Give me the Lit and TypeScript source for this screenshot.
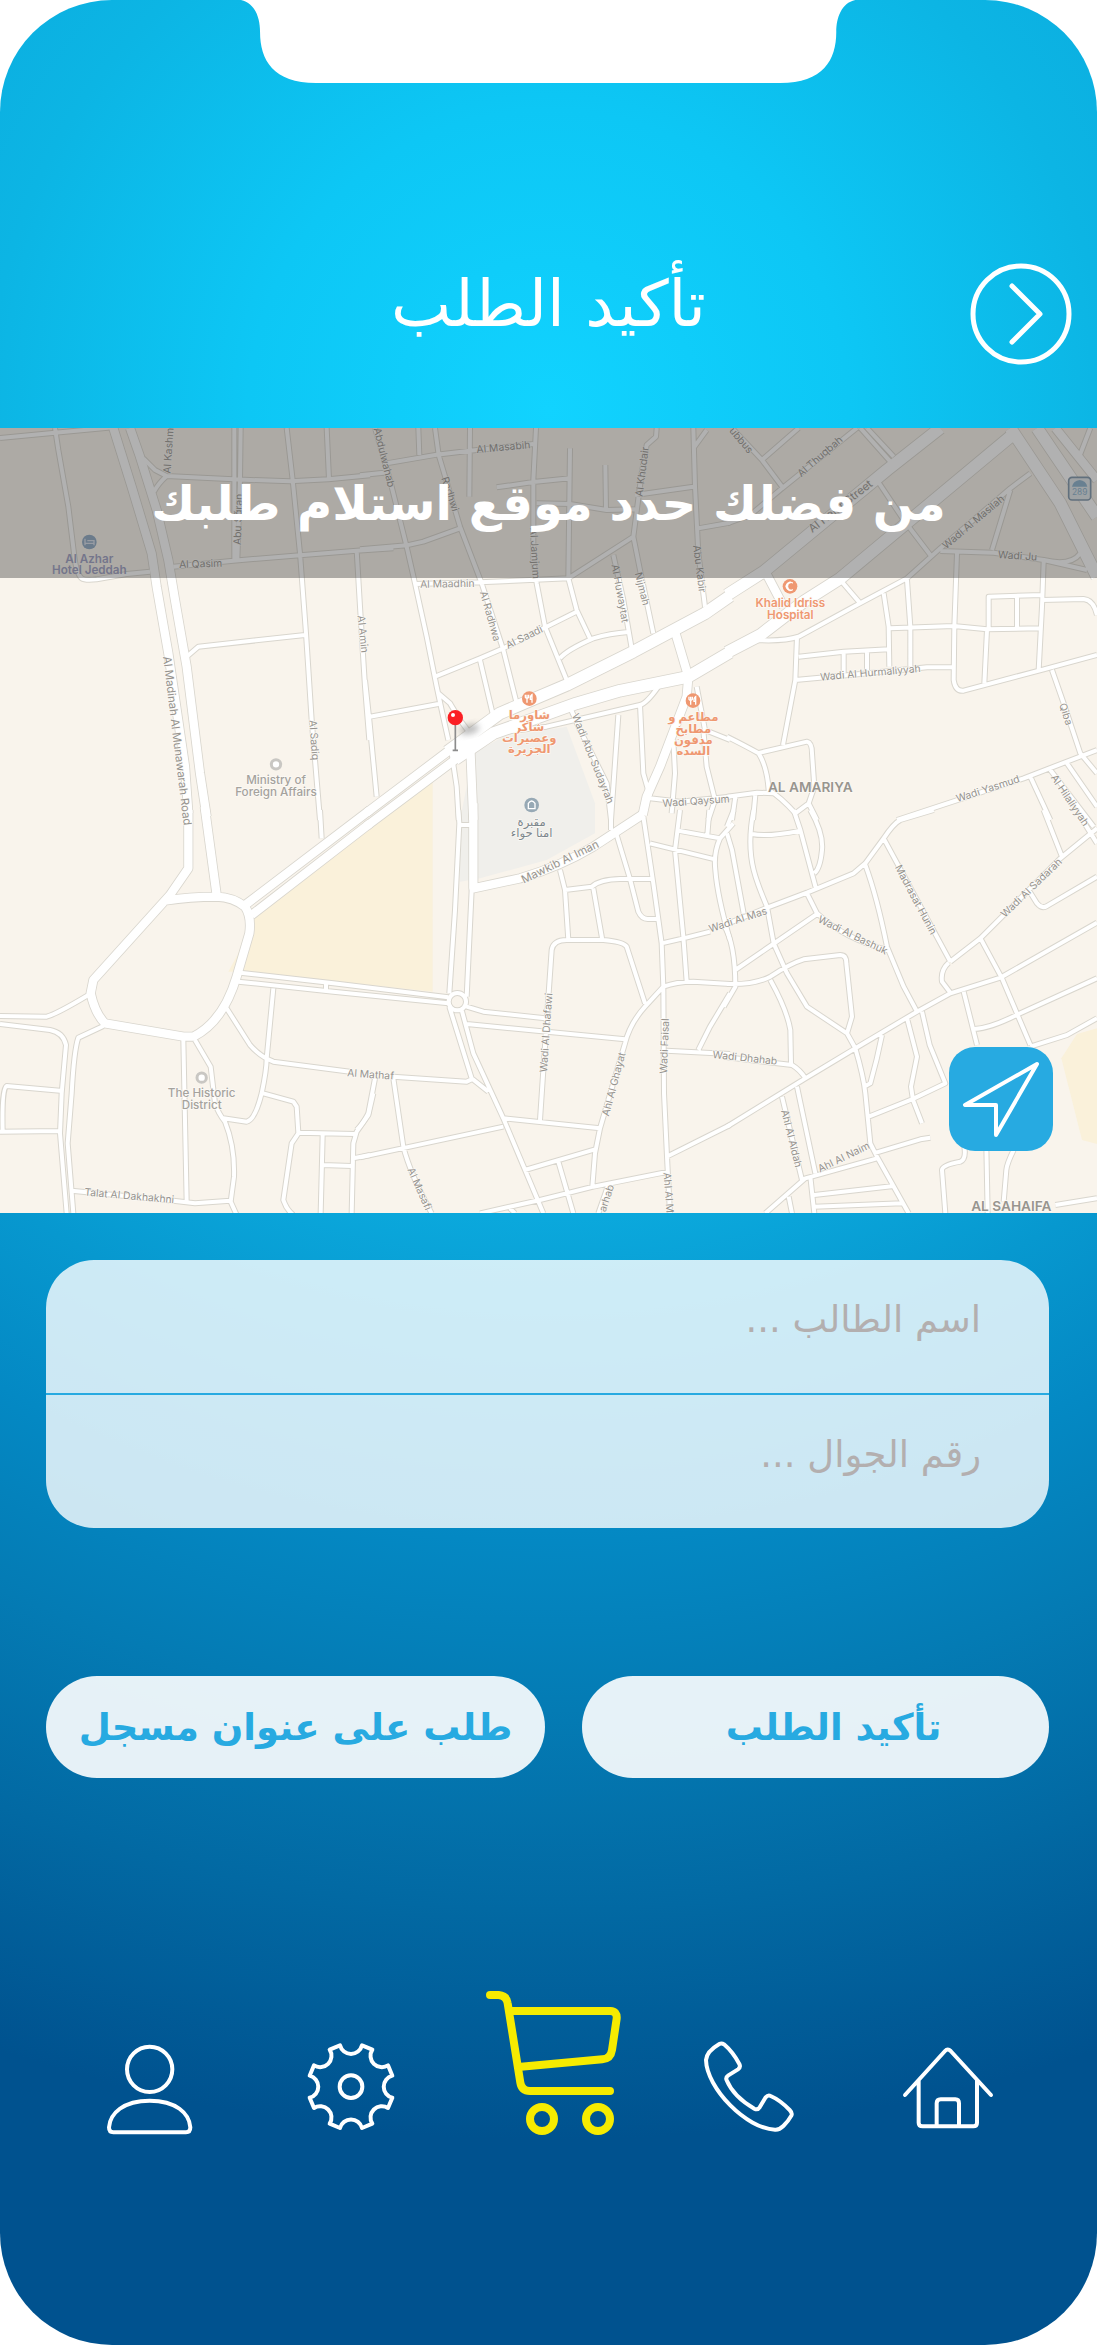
import { LitElement, html, css, svg } from "lit";
import { customElement, property } from "lit/decorators.js";

type Label = [x: number, y: number, angle: number, text: string, kind?: string];

interface Tile {
  x: number;
  y: number;
  streets: string;
  avenues: string;
  highways?: string;
  labels: Label[];
}

/* Street network, split into six tiles. Each tile holds its own local coordinates. */
const TILES: Tile[] = [
  {
    x: 0,
    y: 0,
    streets: `M0 54L165 38L340 22M165 24L175 90L205 260L222 400Q228 460 245 475Q255 482 290 478L380 462L450 455
      M430 115L465 150L500 168L700 178L870 184L985 178L1110 166M500 168Q475 190 462 215M703 24V420M722 24L720 180L712 420
      M860 24L878 180L900 400L918 640L935 900L960 1200M980 24L987 178M520 440L700 422L900 406L1070 392L1180 385
      M1070 392L1080 560L1095 800L1108 960M560 710L595 680L915 645`,
    avenues: `M340 24L395 200L455 400L470 500L505 700L555 1040L565 1180M390 24L420 110L470 270L505 420L525 540L560 740L600 1060L620 1190`,
    labels: [
      [504, 92, -86, "Al Kashm"],
      [713, 298, -88, "Abu Sǧran"],
      [602, 430, -2, "Al Qasim"],
      [1090, 642, 84, "Al Amin"],
      [944, 960, 86, "Al Sadiq"],
      [532, 962, 83, "Al Madinah Al Munawarah Road", "major"],
    ],
  },
  {
    x: 1080,
    y: 0,
    streets: `M0 166L85 157M45 24L90 180L140 380L165 490L200 650L230 800L245 870L265 960M80 130L230 104L330 92L520 72M175 24L178 105
      M225 24L236 105L300 320L365 490L430 690L470 850M330 24L328 230M528 24L520 180V420L530 490L555 620L620 780
      M410 202L520 186L630 175M630 85L625 470M736 135L738 270M530 250L630 252L740 270L825 268
      M890 24L888 50L860 75L845 160L820 350L625 475L360 487L165 492M0 388L140 376L190 365L300 325
      M820 350L840 450L880 640M760 405L790 540L815 685M1000 24L1005 200L1015 400L1035 560M1040 30L1000 85
      M825 225L1000 200M1015 325L1110 308M625 475L650 570L690 655M225 770L360 715L430 685L650 575
      M600 715Q620 690 700 655Q750 640 805 636M360 720L400 890M30 890L235 852M235 820L270 850L300 900L330 940
      M895 800Q860 850 840 855L560 920L400 940M840 855L850 1060L870 1130M625 850L660 930L740 1090L753 1200M775 885L753 1200
      M1010 800L1035 930L1110 960M940 960L945 1060L935 1180M1030 930L1040 1040L1065 1140L1045 1200M870 1135L960 1145L1110 1130
      M15 780L28 900L50 1130M275 1000L290 1100L296 1200`,
    avenues: `M945 635L985 770L980 830L900 1040L860 1130L848 1185M330 960L340 1200M20 1178L280 982M20 1218L300 1008`,
    highways: `M262 995L420 880L620 795L820 695L1035 580L1110 528M285 1018L400 940L650 850L780 812L985 770L1110 697`,
    labels: [
      [74, 112, 76, "Abdulwahab"],
      [272, 222, 72, "Radhwi"],
      [430, 80, -5, "Al Masabih"],
      [526, 400, 87, "Al Jamjum"],
      [845, 155, -83, "Al Khudair"],
      [262, 490, -1, "Al Maadhin"],
      [392, 588, 74, "Al Radhwa"],
      [492, 650, -26, "Al Saadi"],
      [782, 520, 80, "Al Huwaytat"],
      [848, 506, 76, "Nijmah"],
      [1020, 446, 83, "Abu Kabir"],
      [700, 1015, 68, "Wadi Abu Sudayrah"],
      [1008, 1142, -4, "Wadi Qaysum"],
    ],
  },
  {
    x: 2181,
    y: 0,
    streets: `M15 24L105 120L165 200M105 120L215 24M0 310L70 285L165 205L390 24M400 24L490 125M420 24L500 110M450 180L530 300L610 405
      M1090 24L1055 115M850 210L795 390M910 160L850 205L640 385L540 475L380 560L215 650Q170 665 85 660
      M640 393L800 398L950 420L1080 450M950 420Q1030 440 1060 400M950 425L945 560L935 750
      M690 400L682 620L680 780Q685 815 710 812L950 748L1110 705M540 480L550 620V740M470 520L485 620L487 740
      M490 625L680 618L780 628L940 625M785 625V530L945 525M870 530V625M780 630L772 790M945 540L1070 537Q1100 540 1110 585
      M210 650L205 780L168 975M215 710L350 695L485 688M350 700V760M420 692V750M205 780L400 762L600 742H680M340 480L400 550
      M0 950Q60 980 95 1000Q120 1040 125 1110Q160 1130 205 1180M90 1000L240 965Q255 968 255 1000L262 1100L245 1150L205 1180
      M245 1150L270 1200M0 1130L90 1118L140 1120M25 1130L15 1200M85 1125L78 1200M975 750L1010 850L1060 1000L1110 1060
      M510 1200L890 1075L1110 990M910 1070L970 1200M970 1050L1100 1220M1020 1030L1110 1160`,
    avenues: `M115 455L170 560M985 24L1110 180`,
    highways: `M0 525L110 455L480 150L640 24M0 697L100 645L230 545L340 475L850 50M850 24L1000 250L1110 470M930 24L1110 290`,
    labels: [
      [44, 60, 50, "ubbus"],
      [278, 108, -41, "Al Thuqbah"],
      [340, 258, -38, "Al Hejar Street", "major"],
      [738, 305, -40, "Wadi Al Masilah"],
      [872, 406, 4, "Wadi Ju"],
      [430, 757, -5, "Wadi Al Hurmaliyyah"],
      [1018, 882, 72, "Qiba"],
      [782, 1105, -18, "Wadi Yasmud"],
      [1030, 1140, 56, "Al Hilaliyyah"],
    ],
  },
  {
    x: 0,
    y: 1170,
    streets: `M960 0L965 85M720 488L1000 520L1345 562M715 515L1000 545L1345 580M978 518V545M0 618L140 620Q170 612 265 555
      M0 642L150 660Q190 668 198 705L185 850L180 970L200 1210M310 648L235 683Q222 720 215 850L203 1000L220 1210
      M180 842L20 828Q5 835 8 965M0 965L180 963M215 1142L520 1172L585 1180L690 1172M550 690L560 1175
      M585 690L632 770L645 880Q655 910 675 935Q705 1010 702 1100L692 1175L710 1215
      M670 925L740 935Q765 930 785 850Q800 780 800 745L820 535M680 595L750 705Q780 740 820 755L1050 785
      M790 850L880 875L890 890L895 968L1065 972M895 970L875 1000L850 1170Q860 1200 880 1215M968 975L962 1210M968 1065L1055 1068
      M1055 1210L1060 1000L1070 965L1105 915L1120 850M1060 1045L1110 1035`,
    avenues: `M565 0V175L510 255L280 510L272 550Q285 610 315 640L550 680H580Q670 635 710 500L748 370Q755 320 735 290Q700 262 650 260Q570 260 495 272
      M614 -10L650 255M738 283L1110 0M755 315L1110 40`,
    labels: [
      [388, 1156, 5, "Talat Al Dakhakhni"],
      [1112, 792, 4, "Al Mathaf"],
    ],
  },
  {
    x: 1080,
    y: 1170,
    streets: `M295 0L298 40L285 300L268 550M298 45H340M335 240L320 560M268 590L335 805L385 845M305 600L340 730L430 925L550 1210
      M320 590L370 605L555 625M320 642L795 688M100 800L320 815L335 808M45 805L25 910Q10 940 -10 960M100 805L130 1010Q150 1090 215 1210
      M0 1042L430 950M430 925L720 955M540 930L550 780L575 420Q580 390 620 390H730Q790 395 800 410L855 580
      M600 180L615 240L625 390M615 240L695 230Q720 208 780 207H880M700 235L727 390M770 75L810 207L835 305Q845 328 865 327H895
      M753 0V60M850 20L880 220L905 400L910 530L912 850L922 1060L930 1210M870 100L1065 148M960 0L945 120L970 380L980 515
      M1120 40L1080 85Q1060 130 1066 180Q1072 260 1110 390M955 62L1080 85M1048 0L1042 75M905 400L970 385L1050 365
      M910 530Q950 515 1000 515L1110 522M910 530L855 590Q810 640 795 700L720 955L705 1030L697 1130
      M920 722L1110 732M1015 720L1050 650L1110 550M920 1040L1110 945M360 1210L540 1170L700 1130L925 1085
      M495 1080L705 1018M595 1055L640 1210M745 1125L715 1210M450 1195L465 1210M318 575A26 26 0 1 1 266 575A26 26 0 1 1 318 575`,
    avenues: `M340 -20V235L480 205Q600 170 700 110L850 12`,
    labels: [
      [600, 155, -26, "Mawkib Al Iman", "major"],
      [557, 668, -86, "Wadi Al Dhafawi"],
      [760, 822, -75, "Ahl Al Ghayat"],
      [912, 708, -88, "Wadi Faisal"],
      [180, 1136, 66, "Al Masafi"],
      [738, 1164, -72, "arhab"],
      [927, 1148, 86, "Ahl Al M"],
    ],
  },
  {
    x: 2181,
    y: 1170,
    streets: `M80 0Q60 100 80 180Q90 220 120 290L140 400L180 490L240 590L360 670L385 715Q410 800 415 850L430 1000L450 1040L545 1210
      M75 72Q120 82 220 62M200 0L220 60L268 240M250 0Q290 70 285 120Q280 175 262 190M20 0L0 50M0 70L15 120L50 310
      M-20 350L115 295L240 248L380 190L415 160L470 85Q500 40 520 30L620 0M240 250L270 310Q350 385 480 420M25 480L270 312
      M415 165Q450 260 480 410L530 530L570 605M470 85L670 455M-10 345Q25 400 25 530L-10 590
      M0 522Q80 525 130 500Q190 460 230 448L340 435Q358 435 358 460L375 620L360 670M130 510Q180 600 190 660L192 760
      M0 742L195 765Q220 780 235 805M0 950L235 805L385 715L570 605L670 550L820 503L1110 338
      M670 455L760 385L1000 145L1110 55M665 458Q640 480 645 515L670 548M950 0L1005 140M1060 20L1110 100
      M905 240L930 280Q945 298 960 288L1110 200M762 388L825 505L910 705M710 545L750 705M742 657Q790 655 875 612L1110 505
      M910 710L1020 675L1110 625M585 605L608 705L655 820L555 868L425 920M540 625L570 740L552 830L558 870L585 940
      M465 675Q450 750 430 820L415 828M165 860L225 1110M210 830L265 1090M115 1210L235 1105L450 1045M440 1030L580 988L610 983
      M250 1100L262 1210M262 1155L500 1128M262 1190L525 1180M185 1160L195 1210M712 1010Q718 1048 700 1055Q645 1065 645 1080L655 1210
      M778 1010L782 1210M860 1020Q840 1060 838 1080L830 1175M985 1185L1110 1165`,
    avenues: ``,
    labels: [
      [32, 328, -18, "Wadi Al Mas"],
      [378, 374, 26, "Wadi Al Bashuk"],
      [568, 268, 62, "Madrasat Hunin"],
      [912, 232, -44, "Wadi Al Sadarah"],
      [54, 742, 6, "Wadi Dhahab"],
      [195, 985, 76, "Ahl Al Aldah"],
      [350, 1040, -26, "Ahl Al Naim"],
    ],
  },
];

@customElement("street-map")
class StreetMap extends LitElement {
  static styles = css`
    :host {
      display: block;
    }
    .map {
      display: block;
      width: 100%;
      height: 100%;
      font-family: Inter, "Noto Sans", "DejaVu Sans", sans-serif;
    }
    .land {
      fill: #f9f4ec;
    }
    .sand {
      fill: #faf1da;
    }
    .park {
      fill: #f0efeb;
    }
    .road {
      fill: none;
      stroke-linejoin: round;
    }
    .casing {
      stroke: #d9d6ce;
    }
    .surface {
      stroke: #ffffff;
    }
    .street.casing {
      stroke-width: 18px;
    }
    .street.surface {
      stroke-width: 12px;
    }
    .avenue.casing {
      stroke-width: 30px;
    }
    .avenue.surface {
      stroke-width: 25px;
    }
    .highway.casing {
      stroke-width: 40px;
    }
    .highway.surface {
      stroke-width: 35px;
    }
    text {
      text-anchor: middle;
      dominant-baseline: central;
      font-size: 31px;
      fill: #96938e;
      paint-order: stroke;
      stroke: #fcfaf6;
      stroke-width: 4px;
    }
    .major {
      font-size: 34px;
    }
    .place {
      font-size: 35px;
      font-weight: 500;
      fill: #a5a29d;
    }
    .district {
      font-size: 41px;
      font-weight: 600;
      fill: #98958f;
    }
    .food {
      font-size: 35px;
      font-weight: 600;
      fill: #ef9871;
    }
    .hotel {
      font-size: 35px;
      font-weight: 600;
      fill: #9a9cc0;
      stroke: none;
    }
    .memorial {
      font-size: 35px;
      fill: #7d868c;
    }
    .shield {
      font-size: 25px;
      fill: #86aeca;
      stroke: none;
    }
  `;

  private layer(kind: string) {
    return TILES.map(
      (t) => svg`<g transform="translate(${t.x} ${t.y})">
        <path class="road street ${kind}" d=${t.streets}></path>
        <path class="road avenue ${kind}" d=${t.avenues}></path>
        <path class="road highway ${kind}" d=${t.highways ?? ""}></path>
      </g>`
    );
  }

  private lines(x: number, y: number, cls: string, rows: string[]) {
    return rows.map((r, i) => svg`<text class=${cls} x=${x} y=${y + i * 34}>${r}</text>`);
  }

  private dining(x: number, y: number) {
    return svg`<g transform="translate(${x} ${y})">
      <circle r="22" fill="#ef9871"></circle>
      <path d="M-7 12V-12M-12 -12V-4Q-7 2 -2 -4V-12M8 12V-12Q2 -8 3 2H8" fill="none" stroke="#fff" stroke-width="4"></path>
    </g>`;
  }

  render() {
    return html`
      <svg class="map" viewBox="0 24 3291 2355" preserveAspectRatio="xMidYMid slice" role="img" aria-label="خريطة">
        <defs>
          <filter id="soft" x="-50%" y="-50%" width="200%" height="200%"><feGaussianBlur stdDeviation="9"></feGaussianBlur></filter>
        </defs>
        <rect class="land" y="0" width="3291" height="2400"></rect>
        <path class="sand" d="M760 1495L1298 1080V1715L740 1655H685L715 1600Z"></path>
        <path class="sand" d="M3291 1825L3231 1842L3184 1915L3246 2160L3291 2172Z"></path>
        <path class="park" d="M1380 1385V1200L1420 1000L1510 950L1700 920L1785 1150V1240L1640 1320L1440 1375Z"></path>
        ${this.layer("casing")} ${this.layer("surface")}
        ${TILES.map(
          (t) => svg`<g transform="translate(${t.x} ${t.y})">
            ${t.labels.map(([x, y, a, s, k]) => svg`<text class=${k ?? "minor"} transform="translate(${x} ${y}) rotate(${a})">${s}</text>`)}
          </g>`
        )}

        <circle cx="268" cy="366" r="22" fill="#8aa5c0"></circle>
        <path d="M255 356V376M255 370H282V376M262 362H282V370" fill="none" stroke="#d6dde8" stroke-width="4"></path>
        ${this.lines(268, 416, "hotel", ["Al Azhar", "Hotel Jeddah"])}

        <circle cx="828" cy="1033" r="14" fill="#fff" stroke="#c9c7c3" stroke-width="9"></circle>
        ${this.lines(828, 1081, "place", ["Ministry of", "Foreign Affairs"])}
        <circle cx="605" cy="1973" r="14" fill="#fff" stroke="#c9c7c3" stroke-width="9"></circle>
        ${this.lines(605, 2020, "place", ["The Historic", "District"])}

        ${this.dining(1588, 836)} ${this.lines(1588, 886, "food", ["شاورما", "شاكر", "وعصيرات", "الجزيرة"])}
        ${this.dining(2079, 842)} ${this.lines(2080, 892, "food", ["مطاعم و", "مطابخ", "مدفون", "السده"])}

        <circle cx="1595" cy="1155" r="22" fill="#97a9b5"></circle>
        <path d="M1585 1166V1150Q1595 1136 1605 1150V1166Z" fill="none" stroke="#fff" stroke-width="4"></path>
        ${this.lines(1595, 1206, "memorial", ["مقبرة", "امنا حواء"])}

        <circle cx="2370" cy="499" r="22" fill="#ef9871"></circle>
        <path d="M2379 489A13 13 0 1 0 2379 509A11 11 0 1 1 2379 489Z" fill="#fff" stroke="#fff" stroke-width="2"></path>
        ${this.lines(2371, 550, "food", ["Khalid Idriss", "Hospital"])}

        <text class="district" x="2431" y="1100">AL AMARIYA</text>
        <text class="district" x="3034" y="2358">AL SAHAIFA</text>

        <rect x="3206" y="172" width="66" height="68" rx="10" fill="#dfe6ea" stroke="#7b93a8" stroke-width="5"></rect>
        <path d="M3216 200Q3220 182 3239 180Q3258 182 3262 200Z" fill="#86aeca"></path>
        <text class="shield" x="3239" y="217">289</text>

        <ellipse cx="1408" cy="928" rx="30" ry="14" fill="#777" opacity="0.5" filter="url(#soft)" transform="rotate(-14 1408 928)"></ellipse>
        <path d="M1366 900V990M1358 991H1374" fill="none" stroke="#8c8c8c" stroke-width="5"></path>
        <circle cx="1366" cy="893" r="23" fill="#fb1f24"></circle>
        <circle cx="1359" cy="885" r="6" fill="#fff"></circle>
      </svg>
    `;
  }
}

const ICONS = {
  home: svg`<svg class="icon" viewBox="948 93 432 432" aria-hidden="true">
    <path d="M1035 405L1155 273Q1163 264 1172 273L1293 405M1076 362V488Q1076 499 1088 499H1240Q1251 499 1251 488V362M1130 495V430Q1130 418 1142 418H1186Q1197 418 1197 430V495"></path></svg>`,
  phone: svg`<svg class="icon" viewBox="348 93 432 432" aria-hidden="true">
    <path d="M478 252Q440 274 438 300C440 385 560 507 645 509Q658 510 670 498Q686 482 694 467Q698 459 689 450Q660 420 632 408Q624 404 617 412L599 442Q593 451 583 446Q521 411 500 361Q496 352 505 346L534 328Q543 322 538 312Q518 275 492 253Q485 248 478 252Z"></path></svg>`,
  cart: svg`<svg class="icon heavy" viewBox="1248 93 432 432" aria-hidden="true">
    <path d="M1287 105H1313Q1337 107 1340 130L1378 368Q1382 393 1407 393H1647M1346 153H1648Q1669 154 1667 176L1653 270Q1649 296 1624 298L1380 320"></path>
    <circle cx="1443" cy="477" r="36"></circle><circle cx="1611" cy="477" r="36"></circle></svg>`,
  gear: svg`<svg class="icon" viewBox="650 93 432 432" aria-hidden="true">
    <path d="M839 256A34 34 0 0 0 905 256L936 269A34 34 0 0 0 983 316L996 347A34 34 0 0 0 996 413L983 444A34 34 0 0 0 936 491L905 504A34 34 0 0 0 839 504L808 491A34 34 0 0 0 761 444L748 413A34 34 0 0 0 748 347L761 316A34 34 0 0 0 808 269Z"></path>
    <circle cx="872" cy="380" r="34"></circle></svg>`,
  user: svg`<svg class="icon" viewBox="51 93 432 432" aria-hidden="true">
    <circle cx="269" cy="328" r="68"></circle>
    <path d="M160 517Q147 517 147 502C150 460 190 422 269 422S388 460 391 502Q391 517 378 517Z"></path></svg>`,
};

@customElement("tab-bar")
class TabBar extends LitElement {
  @property() active = "cart";

  static styles = css`
    :host {
      display: block;
    }
    .tabs {
      display: grid;
      grid-template-columns: repeat(5, 1fr);
      justify-items: center;
      padding: 0 49px;
    }
    .tab {
      display: block;
      color: #ffffff;
    }
    .tab.active {
      color: #f6eb00;
    }
    .icon {
      display: block;
      width: 144px;
      height: 144px;
      overflow: visible;
      fill: none;
      stroke: currentColor;
      stroke-width: 12px;
      stroke-linecap: round;
      stroke-linejoin: round;
    }
    .heavy {
      stroke-width: 24px;
    }
  `;

  render() {
    const tabs = [
      { id: "home", label: "الرئيسية", icon: ICONS.home },
      { id: "phone", label: "اتصل بنا", icon: ICONS.phone },
      { id: "cart", label: "السلة", icon: ICONS.cart },
      { id: "gear", label: "الإعدادات", icon: ICONS.gear },
      { id: "user", label: "حسابي", icon: ICONS.user },
    ];
    return html`<nav class="tabs">
      ${tabs.map(
        (t) => html`<a class="tab ${t.id === this.active ? "active" : ""}" href="#${t.id}" aria-label=${t.label}>${t.icon}</a>`
      )}
    </nav>`;
  }
}

@customElement("app-root")
class AppRoot extends LitElement {
  static styles = css`
    :host {
      display: block;
      background: #ffffff;
      font-family: "DejaVu Sans", sans-serif;
    }
    * {
      box-sizing: border-box;
    }
    .screen {
      display: flex;
      flex-direction: column;
      min-height: 100vh;
      border-radius: 112px;
      overflow: hidden;
      background: radial-gradient(
        circle at 50% 410px,
        #11d3ff 0,
        #0dc7f5 300px,
        #0cb5e4 560px,
        #0ba9dd 800px,
        #0798cf 960px,
        #0489c4 1120px,
        #047bb4 1300px,
        #0269a3 1500px,
        #00528f 1730px
      );
    }
    .notch {
      display: block;
      width: 56%;
      height: 83px;
      margin: 0 auto;
      fill: #ffffff;
    }
    .header {
      display: grid;
      grid-template-columns: 102px 1fr 102px;
      align-items: center;
      padding: 180px 25px 63px;
    }
    .title {
      grid-column: 2;
      margin: 0;
      padding-bottom: 20px;
      font-size: 64px;
      font-weight: 400;
      line-height: 82px;
      text-align: center;
      color: #ffffff;
    }
    .back {
      grid-column: 1;
      grid-row: 1;
      width: 102px;
      height: 102px;
      padding: 0;
      border: 0;
      background: none;
    }
    .glyph {
      display: block;
      width: 100%;
      height: 100%;
      fill: none;
      stroke: #ffffff;
      stroke-linecap: round;
      stroke-linejoin: round;
    }
    .thick {
      stroke-width: 5px;
    }
    .thin {
      stroke-width: 4px;
    }
    .picker {
      position: relative;
    }
    .streets {
      aspect-ratio: 1097 / 785;
    }
    .prompt {
      position: absolute;
      inset: 0 0 auto;
      margin: 0;
      font-size: 48px;
      font-weight: 700;
      line-height: 150px;
      text-align: center;
      color: #ffffff;
      background: rgba(60, 60, 60, 0.4);
    }
    .locate {
      position: absolute;
      right: 44px;
      bottom: 62px;
      width: 104px;
      height: 104px;
      padding: 0;
      border: 0;
      border-radius: 26px;
      background: #27aae1;
    }
    .order {
      display: flex;
      flex-direction: column;
      gap: 148px;
      padding: 47px 48px 0 46px;
    }
    .fields {
      border-radius: 48px;
      overflow: hidden;
      background: rgba(255, 255, 255, 0.8);
    }
    .field {
      display: block;
      width: 100%;
      height: 133px;
      padding: 0 68px 14px;
      border: 0;
      background: none;
      font: 37px "DejaVu Sans", sans-serif;
      color: #6d6e71;
      outline: none;
    }
    .field + .field {
      height: 135px;
      border-top: 2px solid #27aae1;
    }
    .field::placeholder {
      color: #b3afaf;
      opacity: 1;
    }
    .actions {
      display: grid;
      grid-template-columns: 467fr 499fr;
      gap: 37px;
    }
    .action {
      height: 102px;
      padding: 0;
      border: 0;
      border-radius: 51px;
      background: rgba(255, 255, 255, 0.9);
      font: 700 37px "DejaVu Sans", sans-serif;
      color: #27aae1;
      white-space: nowrap;
    }
    .confirm {
      padding-left: 36px;
    }
    .tabs {
      margin: 213px 0 210px;
    }
  `;

  render() {
    return html`
      <main class="screen" dir="rtl" lang="ar">
        <svg class="notch" viewBox="0 0 613 83" preserveAspectRatio="none" aria-hidden="true">
          <path d="M0 0C14 3 19 18 19 32C19 60 32 83 75 83H538C581 83 594 60 594 32C594 18 599 3 613 0Z"></path>
        </svg>
        <header class="header">
          <h1 class="title">تأكيد الطلب</h1>
          <button class="back" type="button" aria-label="رجوع">
            <svg class="glyph thick" viewBox="0 0 102 102"><circle cx="51" cy="51" r="48"></circle><path d="M42 23L70 51L42 79"></path></svg>
          </button>
        </header>
        <section class="picker">
          <street-map class="streets"></street-map>
          <h2 class="prompt">من فضلك حدد موقع استلام طلبك</h2>
          <button class="locate" type="button" aria-label="موقعي الحالي">
            <svg class="glyph thin" viewBox="0 0 104 104"><path d="M88 17L16 58H47V88Z"></path></svg>
          </button>
        </section>
        <form class="order">
          <div class="fields">
            <input class="field" type="text" name="name" aria-label="اسم الطالب" placeholder="اسم الطالب ..." />
            <input class="field" type="tel" name="phone" dir="rtl" aria-label="رقم الجوال" placeholder="رقم الجوال ..." />
          </div>
          <div class="actions">
            <button class="action confirm" type="button">تأكيد الطلب</button>
            <button class="action" type="button">طلب على عنوان مسجل</button>
          </div>
        </form>
        <tab-bar class="tabs" active="cart"></tab-bar>
      </main>
    `;
  }
}
